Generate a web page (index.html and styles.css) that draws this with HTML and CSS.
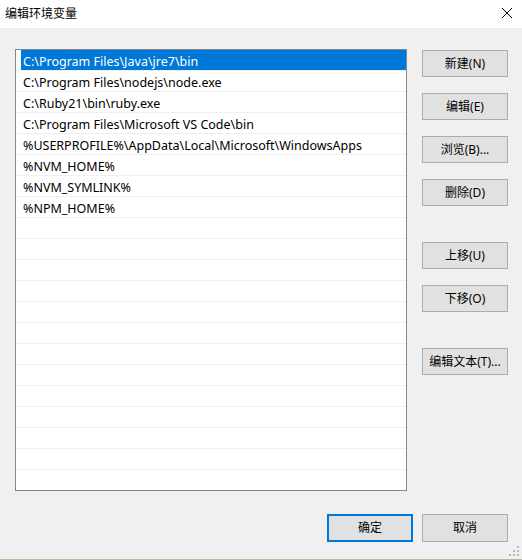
FILE: index.html
```html
<!DOCTYPE html>
<html lang="zh-CN">
<head>
<meta charset="utf-8">
<title>编辑环境变量</title>
<link rel="stylesheet" href="styles.css">
</head>
<body>
<div class="window">
  <div class="titlebar">
    <span class="title">编辑环境变量</span>
    <span class="close" aria-label="关闭">
      <svg width="12" height="12" viewBox="0 0 12 12"><path d="M1 1 L11 11 M11 1 L1 11" stroke="#000" stroke-width="1" fill="none"/></svg>
    </span>
  </div>
  <div class="content">
    <div class="main">
      <div class="list">
        <div class="row selected"><span class="cell">C:\Program Files\Java\jre7\bin</span></div>
        <div class="row"><span class="cell">C:\Program Files\nodejs\node.exe</span></div>
        <div class="row"><span class="cell">C:\Ruby21\bin\ruby.exe</span></div>
        <div class="row"><span class="cell">C:\Program Files\Microsoft VS Code\bin</span></div>
        <div class="row"><span class="cell">%USERPROFILE%\AppData\Local\Microsoft\WindowsApps</span></div>
        <div class="row"><span class="cell">%NVM_HOME%</span></div>
        <div class="row"><span class="cell">%NVM_SYMLINK%</span></div>
        <div class="row"><span class="cell">%NPM_HOME%</span></div>
        <div class="row"><span class="cell"></span></div>
        <div class="row"><span class="cell"></span></div>
        <div class="row"><span class="cell"></span></div>
        <div class="row"><span class="cell"></span></div>
        <div class="row"><span class="cell"></span></div>
        <div class="row"><span class="cell"></span></div>
        <div class="row"><span class="cell"></span></div>
        <div class="row"><span class="cell"></span></div>
        <div class="row"><span class="cell"></span></div>
        <div class="row"><span class="cell"></span></div>
        <div class="row"><span class="cell"></span></div>
        <div class="row"><span class="cell"></span></div>
        <div class="row"><span class="cell"></span></div>
      </div>
      <div class="side">
        <button class="btn">新建(N)</button>
        <button class="btn">编辑(E)</button>
        <button class="btn">浏览(B)...</button>
        <button class="btn">删除(D)</button>
        <button class="btn group">上移(U)</button>
        <button class="btn">下移(O)</button>
        <button class="btn group">编辑文本(T)...</button>
      </div>
    </div>
    <div class="footer">
      <button class="btn default">确定</button>
      <button class="btn">取消</button>
    </div>
    <div class="grip" aria-hidden="true">
      <svg width="10" height="10" viewBox="0 0 10 10" fill="#b8b8b8">
        <rect x="8" y="0" width="2" height="2"/>
        <rect x="4" y="4" width="2" height="2"/><rect x="8" y="4" width="2" height="2"/>
        <rect x="0" y="8" width="2" height="2"/><rect x="4" y="8" width="2" height="2"/><rect x="8" y="8" width="2" height="2"/>
      </svg>
    </div>
  </div>
</div>
</body>
</html>
```

FILE: styles.css
```css
* { box-sizing: border-box; }
html, body { margin: 0; padding: 0; }
body {
  font-family: "Noto Sans", "Noto Sans CJK SC", sans-serif;
  font-size: 12px;
  color: #000;
  background: #f0f0f0;
}
.window {
  width: 522px;
  height: 560px;
  display: flex;
  flex-direction: column;
  background: #f0f0f0;
  border-bottom: 1px solid #a9c39b;
}
.titlebar {
  height: 28px;
  background: #fff;
  display: flex;
  align-items: center;
  justify-content: space-between;
  padding: 0 9px 2px 5px;
  flex: none;
}
.title {
  font-family: "Noto Sans CJK SC", sans-serif;
  font-size: 12px;
  line-height: 16px;
}
.close { display: flex; width: 12px; height: 12px; }
.content {
  flex: 1;
  position: relative;
  padding: 21px 14px 0 15px;
  display: flex;
  flex-direction: column;
}
.main {
  display: flex;
  gap: 15px;
}
.list {
  width: 392px;
  height: 442px;
  background: #fff;
  border: 1px solid #828790;
  overflow: hidden;
}
.row {
  height: 21px;
  border-bottom: 1px solid #f0f0f0;
  display: flex;
}
.cell {
  flex: 1;
  margin: 0 0 0 5px;
  padding: 3px 0 0 2px;
  font-size: 12.5px;
  line-height: 17px;
  white-space: nowrap;
}
.row.selected .cell {
  background: #0078d7;
  color: #fff;
}
.side {
  width: 86px;
  display: flex;
  flex-direction: column;
  gap: 16px;
  padding-top: 1px;
}
.btn {
  font-family: "Noto Sans", "Noto Sans CJK SC", sans-serif;
  font-size: 12px;
  color: #000;
  width: 86px;
  height: 27px;
  background: #e1e1e1;
  border: 1px solid #adadad;
  padding: 0;
  margin: 0;
  line-height: 1;
}
.btn.group { margin-top: 20px; }
.footer {
  display: flex;
  justify-content: flex-end;
  gap: 9px;
  margin-top: 23px;
}
.footer .btn { height: 28px; }
.btn.default { border: 2px solid #0078d7; }
.grip {
  position: absolute;
  right: 3px;
  bottom: 3px;
  display: flex;
}
```
